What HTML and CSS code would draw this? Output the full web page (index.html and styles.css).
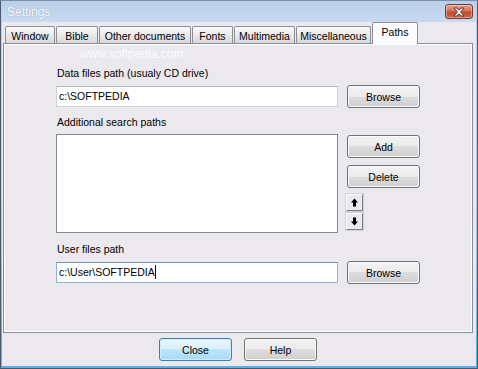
FILE: index.html
```html
<!DOCTYPE html>
<html lang="en">
<head>
    <meta charset="UTF-8">
    <title>Settings</title>
    <link rel="stylesheet" href="styles.css">
</head>
<body>
    <div class="window">
        <div class="titlebar">
            <span class="title">Settings</span>
            <button class="close-btn" type="button">
                <svg width="14" height="10" viewBox="0 0 14 10">
                    <path d="M2 1 H5 L7 3.3 L9 1 H12 L8.6 5 L12 9 H9 L7 6.7 L5 9 H2 L5.4 5 Z" fill="#fff" stroke="#6b3a33" stroke-width="1"/>
                </svg>
            </button>
        </div>
        <div class="body">
            <div class="tabs">
                <div class="tab t-window">Window</div>
                <div class="tab t-bible">Bible</div>
                <div class="tab t-other">Other documents</div>
                <div class="tab t-fonts">Fonts</div>
                <div class="tab t-media">Multimedia</div>
                <div class="tab t-misc">Miscellaneous</div>
                <div class="tab active t-paths">Paths</div>
            </div>
            <div class="panel">
                <span class="site-mark">www.softpedia.com</span>

                <label class="field-label first">Data files path (usualy CD drive)</label>
                <div class="row">
                    <div class="textbox">c:\SOFTPEDIA</div>
                    <button class="btn" type="button">Browse</button>
                </div>

                <label class="field-label">Additional search paths</label>
                <div class="row list-row">
                    <div class="listbox"></div>
                    <div class="side-buttons">
                        <button class="btn" type="button">Add</button>
                        <button class="btn" type="button">Delete</button>
                        <button class="arrow-btn" type="button">
                            <svg width="9" height="9" viewBox="0 0 9 9"><path d="M4.5 0.5 L8 4.5 H6 V8.5 H3 V4.5 H1 Z" fill="#000"/></svg>
                        </button>
                        <button class="arrow-btn" type="button">
                            <svg width="9" height="9" viewBox="0 0 9 9"><path d="M4.5 8.5 L8 4.5 H6 V0.5 H3 V4.5 H1 Z" fill="#000"/></svg>
                        </button>
                    </div>
                </div>

                <label class="field-label last">User files path</label>
                <div class="row">
                    <div class="textbox focused">c:\User\SOFTPEDIA<span class="caret"></span></div>
                    <button class="btn" type="button">Browse</button>
                </div>
            </div>
            <div class="footer">
                <button class="btn default" type="button">Close</button>
                <button class="btn" type="button">Help</button>
            </div>
        </div>
    </div>
</body>
</html>
```

FILE: styles.css
```css
* {
    box-sizing: border-box;
}
body {
    margin: 0;
    font-family: "Liberation Sans", Arial, sans-serif;
    font-size: 10.5px;
    color: #000;
    background: #fff;
}
.window {
    width: 478px;
    height: 369px;
    display: flex;
    flex-direction: column;
    border: 1px solid #4b596b;
    border-top-color: #7d8fa6;
    padding: 0 1px 2px 1px;
    background: linear-gradient(#bcd1ec, #b4cdec 55%, #5aaee6);
}
.titlebar {
    position: relative;
    height: 21px;
    flex-shrink: 0;
    display: flex;
    align-items: center;
    padding-left: 5px;
    background: linear-gradient(#b9cee9, #c8daf0);
}
.title {
    font-size: 12px;
    color: #f7f9fc;
    text-shadow: 0 0 1px #8a99ad;
}
.close-btn {
    position: absolute;
    right: 3px;
    top: 3px;
    width: 28px;
    height: 15px;
    padding: 0;
    display: flex;
    align-items: center;
    justify-content: center;
    border: 1px solid #7a3b2e;
    border-radius: 3px;
    background: linear-gradient(#e2a491, #d2735a 45%, #c04a2e 55%, #d0684c);
    box-shadow: inset 0 0 0 1px rgba(255, 255, 255, 0.35);
}
.body {
    flex: 1;
    display: flex;
    flex-direction: column;
    padding: 0 3px 0 1px;
    background: #ebe9ee;
}
.tabs {
    height: 21px;
    display: flex;
    align-items: flex-end;
    gap: 1px;
    padding-left: 2px;
}
.tab {
    height: 17px;
    display: flex;
    align-items: center;
    justify-content: center;
    border: 1px solid #8c8e94;
    border-bottom: none;
    border-radius: 2px 2px 0 0;
    background: linear-gradient(#fbfbfb, #e6e6e6 60%, #d8d8d8);
    padding-top: 1px;
}
.t-window { width: 50px; }
.t-bible { width: 42px; }
.t-other { width: 92px; }
.t-fonts { width: 41px; }
.t-media { width: 61px; }
.t-misc { width: 75px; }
.tab.active {
    width: 46px;
    height: 22px;
    margin-bottom: -1px;
    position: relative;
    z-index: 1;
    background: #fcfcfe;
    align-items: flex-start;
    padding-top: 3px;
}
.panel {
    position: relative;
    height: 290px;
    display: flex;
    flex-direction: column;
    border: 1px solid #898c95;
    box-shadow: inset 1px 1px 0 #fff, inset -1px -1px 0 #fff;
    padding: 0 0 0 52px;
}
.site-mark {
    position: absolute;
    left: 76px;
    top: 3px;
    font-size: 12px;
    color: rgba(255, 255, 255, 0.8);
    pointer-events: none;
}
.field-label {
    display: block;
    height: 13px;
    line-height: 13px;
    padding-left: 1px;
    margin: 8px 0 5px;
}
.field-label.first {
    margin-top: 23px;
}
.field-label.last {
    margin-top: 10px;
}
.row {
    display: flex;
    align-items: center;
    gap: 9px;
}
.textbox {
    width: 282px;
    height: 21px;
    line-height: 19px;
    padding-left: 2px;
    background: #fff;
    border: 1px solid #cdd0d6;
    border-top-color: #b5b9c1;
}
.textbox.focused {
    border-color: #8fb3d8;
    border-top-color: #6e96c4;
}
.caret {
    display: inline-block;
    width: 1px;
    height: 14px;
    background: #000;
    vertical-align: -3px;
}
.btn {
    width: 73px;
    height: 23px;
    padding: 0;
    font-family: inherit;
    font-size: 10.5px;
    color: #000;
    border: 1px solid #707070;
    border-radius: 3px;
    background: linear-gradient(#f2f2f2, #ebebeb 50%, #dddddd 50%, #cfcfcf);
    box-shadow: inset 0 0 0 1px #fcfcfc;
}
.btn.default {
    border-color: #3c7fb1;
    background: linear-gradient(#eaf6fd, #d9f0fc 50%, #bee6fd 50%, #a7d9f5);
    box-shadow: inset 0 0 0 1px #cfeefd;
}
.list-row {
    align-items: flex-start;
}
.listbox {
    width: 282px;
    height: 99px;
    background: #fff;
    border: 1px solid #828790;
}
.side-buttons {
    display: flex;
    flex-direction: column;
    align-items: flex-start;
    padding-top: 1px;
}
.side-buttons .btn {
    margin-bottom: 7px;
}
.side-buttons .btn + .btn {
    margin-bottom: 6px;
}
.arrow-btn {
    width: 17px;
    height: 17px;
    margin: 0 0 2px -1px;
    padding: 0;
    display: flex;
    align-items: center;
    justify-content: center;
    background: #ebe9ee;
    border: 1px solid;
    border-color: #fff #7f7f7f #7f7f7f #fff;
    box-shadow: 0 0 0 1px #d0d0d0;
}
.footer {
    flex: 1;
    display: flex;
    justify-content: center;
    gap: 12px;
    padding-top: 5px;
}
```
